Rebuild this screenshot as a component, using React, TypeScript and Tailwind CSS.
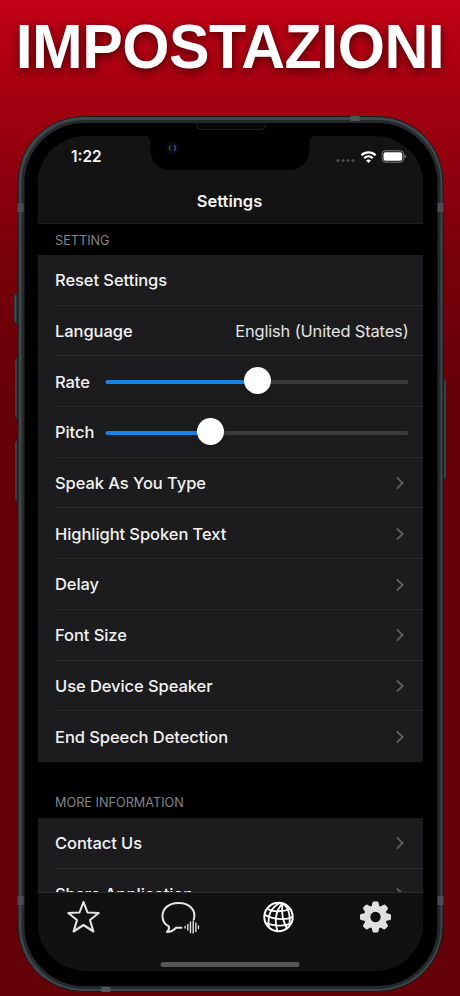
import type { ReactNode } from 'react';

interface RowProps {
  label: string;
  children?: ReactNode;
  last?: boolean;
}

const detailRows = [
  'Speak As You Type',
  'Highlight Spoken Text',
  'Delay',
  'Font Size',
  'Use Device Speaker',
  'End Speech Detection',
];

const gearAngles = [0, 45, 90, 135, 180, 225, 270, 315];

function Chevron() {
  return (
    <svg className="mr-[4.5px] h-[14px] w-[9px]" viewBox="0 0 9 14" fill="none" stroke="#5e5e61" strokeWidth="2">
      <path d="M1.3 1.4 L7.1 7 L1.3 12.6" />
    </svg>
  );
}

function Row({ label, children, last }: RowProps) {
  return (
    <div className="h-[50.7px] shrink-0 pl-[17.5px]">
      <div
        className={`flex h-full items-center justify-between pt-[1.5px] pr-[15px] ${last ? '' : 'border-b border-[#29292b]'}`}
      >
        <span className="text-[16.5px] font-medium tracking-[-0.07px] whitespace-nowrap">{label}</span>
        {children}
      </div>
    </div>
  );
}

function SliderTrack({ value }: { value: number }) {
  return (
    <div className="relative h-[4px] w-[303.5px] rounded-full bg-[#3a3a3c]">
      <div className="h-full rounded-full bg-[#1683ea]" style={{ width: `${value}px` }} />
      <div
        className="absolute -top-[12.5px] h-[27px] w-[27px] -translate-x-1/2 rounded-full bg-white shadow-md"
        style={{ left: `${value}px` }}
      />
    </div>
  );
}

function StatusBar() {
  return (
    <div className="flex h-[41px] items-center justify-between pt-[0.5px] pr-[17.5px] pl-[33.5px]">
      <span className="text-[15.4px] font-semibold">1:22</span>
      <div className="flex items-center">
        <div className="mt-[8px] mr-[6px] flex gap-[1.7px]">
          <span className="h-[3px] w-[3px] rounded-full bg-[#4d4d4d]" />
          <span className="h-[3px] w-[3px] rounded-full bg-[#4d4d4d]" />
          <span className="h-[3px] w-[3px] rounded-full bg-[#4d4d4d]" />
          <span className="h-[3px] w-[3px] rounded-full bg-[#4d4d4d]" />
        </div>
        <svg className="mr-[5px] h-[12px] w-[16px]" viewBox="0 0 16 12" fill="none" stroke="#fff" strokeWidth="2.2">
          <path d="M0.9 4.3 C4.8 0.3 11.2 0.3 15.1 4.3" />
          <path d="M3.7 7.2 C6.2 4.8 9.8 4.8 12.3 7.2" />
          <path d="M8 12 L5.6 9.5 C6.9 8.2 9.1 8.2 10.4 9.5 Z" fill="#fff" stroke="none" />
        </svg>
        <svg className="h-[13px] w-[25px]" viewBox="0 0 25 13">
          <rect x="0.5" y="0.8" width="21.7" height="11.4" rx="3.4" fill="none" stroke="#8a8a8a" strokeWidth="0.9" />
          <rect x="2" y="2.3" width="18.7" height="8.4" rx="2" fill="#fff" />
          <path d="M23.2 4.6 C25 5.3 25 7.7 23.2 8.4 Z" fill="#8a8a8a" />
        </svg>
      </div>
    </div>
  );
}

function TabBar() {
  return (
    <div className="flex h-[79px] shrink-0 flex-col items-center border-t border-[#2a2a2c] bg-[#111111]">
      <div className="flex h-[48px] w-full items-center pt-[0.5px] pl-[29px]">
        {/* Favourites */}
        <svg className="h-[34px] w-[34px]" viewBox="0 0 34 34" fill="none" stroke="#e4e4e4" strokeWidth="2.1" strokeLinejoin="round">
          <path d="M17 2 L21 12.5 L32.2 13 L23.5 20 L26.9 31.5 L17 25 L7.1 31.5 L10.5 20 L1.8 13 L13 12.5 Z" />
        </svg>
        {/* Speech */}
        <svg className="ml-[59px] h-[34px] w-[40px]" viewBox="0 0 40 34" fill="none" stroke="#e4e4e4" strokeWidth="2" strokeLinecap="round" strokeLinejoin="round">
          <path d="M34.3 19.5 C37 10 30 3 19 3 C9.5 3 3 8.3 3 16 C3 21 5.5 24.5 9.3 26.4 C10 28.4 9.2 30.3 7.5 32 C11.5 32 14.5 29.8 16.5 27.7 L22 27.7" />
          <path strokeWidth="1.4" d="M25.6 26.5 V28 M28.3 24.5 V30 M31 22 V32.5 M33.7 21 V33 M36.4 23 V31.5 M39 26 V28.5" />
        </svg>
        {/* Translate */}
        <svg className="ml-[62.5px] h-[32px] w-[32px]" viewBox="0 0 32 32" fill="none" stroke="#fff" strokeWidth="1.8">
          <circle cx="16" cy="16" r="14.2" strokeWidth="2" />
          <path d="M18 1.8 C9 6 4.5 14 6.5 26.5" />
          <path d="M20 2.5 C13.5 9 11.5 20 15 30" />
          <path d="M20 2.5 C19 10 20 20 24.5 27.5" />
          <path d="M20 2.5 C26 6 28 13 27 24" />
          <path d="M5.5 8 C9 10.5 19 11.5 27.5 8" />
          <path d="M2 13.5 C9 18.5 23 19.5 30 16" />
          <path d="M3.5 22 C11 25 21 26 28 22.5" />
        </svg>
        {/* Settings */}
        <svg className="ml-[65.5px] h-[32px] w-[32px]" viewBox="-16 -16 32 32">
          <circle r="8.4" fill="none" stroke="#e0e0e0" strokeWidth="6.4" />
          {gearAngles.map((angle) => (
            <path
              key={angle}
              d="M-4 -10 L-3 -14.4 Q-2.7 -15.5 -1.6 -15.5 H1.6 Q2.7 -15.5 3 -14.4 L4 -10 Z"
              fill="#e0e0e0"
              transform={`rotate(${angle})`}
            />
          ))}
        </svg>
      </div>
      <div className="mt-[21px] mr-[1px] h-[5px] w-[139px] rounded-full bg-[#555555]" />
    </div>
  );
}

function PhoneHardware() {
  return (
    <>
      {/* Side buttons */}
      <div className="absolute top-[176px] -left-[5px] h-[31px] w-[4px] rounded-l-sm border border-[#20262a] bg-[#454c51]" />
      <div className="absolute top-[240px] -left-[4px] h-[62px] w-[3px] rounded-l-sm border border-[#20262a] bg-[#555b5f]" />
      <div className="absolute top-[323px] -left-[4px] h-[62px] w-[3px] rounded-l-sm border border-[#20262a] bg-[#555b5f]" />
      <div className="absolute top-[262px] -right-[4px] h-[101px] w-[3px] rounded-r-sm border border-[#20262a] bg-[#555b5f]" />
      {/* Antenna bands */}
      <div className="absolute top-[86px] -left-px h-[9px] w-[6px] bg-[#4a4c56]" />
      <div className="absolute top-[86px] -right-px h-[9px] w-[6px] bg-[#4a4c56]" />
      <div className="absolute top-[779px] -left-px h-[9px] w-[6px] bg-[#4a4c56]" />
      <div className="absolute top-[779px] -right-px h-[9px] w-[6px] bg-[#4a4c56]" />
      <div className="absolute -top-px left-[332px] h-[5px] w-[9px] bg-[#50575a]" />
      <div className="absolute -bottom-px left-[83px] h-[5px] w-[9px] bg-[#50575a]" />
      {/* Notch and speaker */}
      <svg className="absolute top-[19px] left-[129px] h-[36px] w-[166px]" viewBox="0 0 166 36">
        <path d="M0 0 H166 V1 Q162 1.5 162 7 V13 C162 26 154 34 141 34 H24 C11 34 3 26 3 13 V7 Q3 1.5 0 1 Z" fill="#000" />
        <circle cx="25" cy="12" r="6.5" fill="#0a0a0d" />
        <path d="M22.7 9.300 Q21 12 23 14.500" stroke="#17524c" strokeWidth="1.3" fill="none" />
        <path d="M26.8 9.300 Q29 12 26.800 15" stroke="#2b3f9c" strokeWidth="1.6" fill="none" />
      </svg>
      <div className="absolute top-[6px] left-[177px] h-[7px] w-[71px] rounded-b-md border border-t-0 border-[#1a1f21] bg-[#070909]" />
    </>
  );
}

export default function App() {
  return (
    <div className="flex h-[996px] w-[460px] flex-col items-center overflow-hidden bg-linear-[180deg,#c20016_0px,#a3000f_100px,#7b000b_240px,#650008_400px,#640008_996px] font-[Inter,sans-serif] text-[#f2f2f2]">
      <h1 className="mt-[10.5px] h-[105.5px] shrink-0 scale-x-[0.957] font-['Liberation_Sans',sans-serif] text-[63.5px] leading-[71px] font-bold tracking-[-0.5px] whitespace-nowrap text-white [text-shadow:0_3px_10px_rgba(50,0,0,0.85)]">
        IMPOSTAZIONI
      </h1>

      <div className="relative h-[876px] w-[426px] shrink-0 translate-x-[0.5px] rounded-[66px] border border-[#15191b] bg-[#3e464b] p-[2.5px]">
        <div className="h-full w-full rounded-[63px] border-[3px] border-[#24292c] bg-black px-[13.5px] pt-[13.5px] pb-[14.5px]">
          <div className="flex h-full w-full flex-col overflow-hidden rounded-[48px] bg-black">
            <div className="h-[87.5px] shrink-0 border-b border-[#1e1e1e] bg-[#131313]">
              <StatusBar />
              <h2 className="flex h-[47px] items-center justify-center pt-[1px] pr-[2px] text-[16.5px] font-semibold">
                Settings
              </h2>
            </div>

            <div className="flex min-h-0 flex-1 flex-col overflow-hidden">
              <div className="h-[31.5px] shrink-0 pt-[8.5px] pl-[17.5px] text-[12.7px] leading-[17px] text-[#848488]">
                SETTING
              </div>
              <div className="bg-[#1c1c1e]">
                <Row label="Reset Settings" />
                <Row label="Language">
                  <span className="text-[16.4px] tracking-[-0.13px] text-[#e4e4e4]">English (United States)</span>
                </Row>
                <Row label="Rate">
                  <SliderTrack value={152} />
                </Row>
                <Row label="Pitch">
                  <SliderTrack value={105} />
                </Row>
                {detailRows.map((label, i) => (
                  <Row key={label} label={label} last={i === detailRows.length - 1}>
                    <Chevron />
                  </Row>
                ))}
              </div>
              <div className="h-[56px] shrink-0 pt-[32.5px] pl-[17.5px] text-[12.7px] leading-[17px] text-[#848488]">
                MORE INFORMATION
              </div>
              <div className="bg-[#1c1c1e]">
                <Row label="Contact Us">
                  <Chevron />
                </Row>
                <Row label="Share Application">
                  <Chevron />
                </Row>
              </div>
            </div>

            <TabBar />
          </div>
        </div>
        <PhoneHardware />
      </div>
    </div>
  );
}
